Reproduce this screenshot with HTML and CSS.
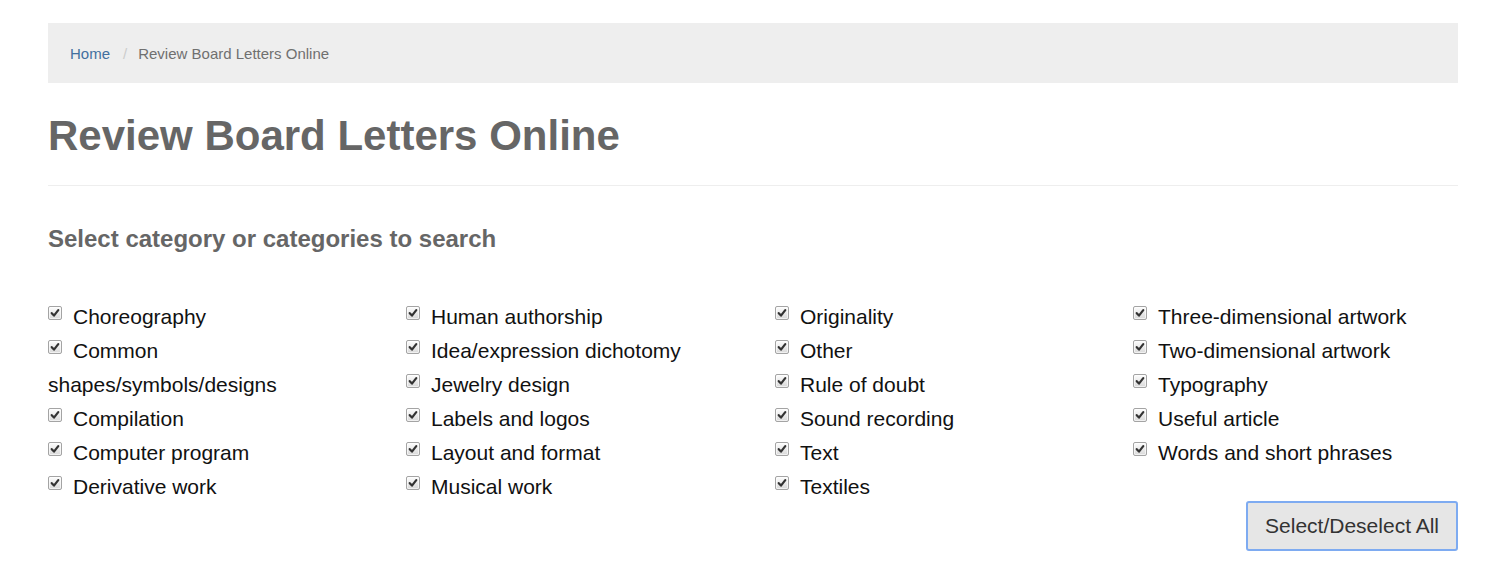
FILE: index.html
```html
<!DOCTYPE html>
<html lang="en">
<head>
<meta charset="utf-8">
<title>Review Board Letters Online</title>
<link rel="stylesheet" href="styles.css">
</head>
<body>
<div class="page">
  <ol class="breadcrumb">
    <li><a href="#" class="crumb-link">Home</a></li>
    <li class="sep">/</li>
    <li class="active">Review Board Letters Online</li>
  </ol>
  <h1 class="title">Review Board Letters Online</h1>
  <hr class="rule">
  <h3 class="subtitle">Select category or categories to search</h3>
  <div class="grid">
    <div class="col">
      <label class="item"><span class="cb"><svg viewBox="0 0 14 14"><path d="M3.2 7.2 L5.8 10 L10.8 3.6" /></svg></span>Choreography</label>
      <label class="item"><span class="cb"><svg viewBox="0 0 14 14"><path d="M3.2 7.2 L5.8 10 L10.8 3.6" /></svg></span>Common shapes/symbols/designs</label>
      <label class="item"><span class="cb"><svg viewBox="0 0 14 14"><path d="M3.2 7.2 L5.8 10 L10.8 3.6" /></svg></span>Compilation</label>
      <label class="item"><span class="cb"><svg viewBox="0 0 14 14"><path d="M3.2 7.2 L5.8 10 L10.8 3.6" /></svg></span>Computer program</label>
      <label class="item"><span class="cb"><svg viewBox="0 0 14 14"><path d="M3.2 7.2 L5.8 10 L10.8 3.6" /></svg></span>Derivative work</label>
    </div>
    <div class="col">
      <label class="item"><span class="cb"><svg viewBox="0 0 14 14"><path d="M3.2 7.2 L5.8 10 L10.8 3.6" /></svg></span>Human authorship</label>
      <label class="item"><span class="cb"><svg viewBox="0 0 14 14"><path d="M3.2 7.2 L5.8 10 L10.8 3.6" /></svg></span>Idea/expression dichotomy</label>
      <label class="item"><span class="cb"><svg viewBox="0 0 14 14"><path d="M3.2 7.2 L5.8 10 L10.8 3.6" /></svg></span>Jewelry design</label>
      <label class="item"><span class="cb"><svg viewBox="0 0 14 14"><path d="M3.2 7.2 L5.8 10 L10.8 3.6" /></svg></span>Labels and logos</label>
      <label class="item"><span class="cb"><svg viewBox="0 0 14 14"><path d="M3.2 7.2 L5.8 10 L10.8 3.6" /></svg></span>Layout and format</label>
      <label class="item"><span class="cb"><svg viewBox="0 0 14 14"><path d="M3.2 7.2 L5.8 10 L10.8 3.6" /></svg></span>Musical work</label>
    </div>
    <div class="col">
      <label class="item"><span class="cb"><svg viewBox="0 0 14 14"><path d="M3.2 7.2 L5.8 10 L10.8 3.6" /></svg></span>Originality</label>
      <label class="item"><span class="cb"><svg viewBox="0 0 14 14"><path d="M3.2 7.2 L5.8 10 L10.8 3.6" /></svg></span>Other</label>
      <label class="item"><span class="cb"><svg viewBox="0 0 14 14"><path d="M3.2 7.2 L5.8 10 L10.8 3.6" /></svg></span>Rule of doubt</label>
      <label class="item"><span class="cb"><svg viewBox="0 0 14 14"><path d="M3.2 7.2 L5.8 10 L10.8 3.6" /></svg></span>Sound recording</label>
      <label class="item"><span class="cb"><svg viewBox="0 0 14 14"><path d="M3.2 7.2 L5.8 10 L10.8 3.6" /></svg></span>Text</label>
      <label class="item"><span class="cb"><svg viewBox="0 0 14 14"><path d="M3.2 7.2 L5.8 10 L10.8 3.6" /></svg></span>Textiles</label>
    </div>
    <div class="col last">
      <label class="item"><span class="cb"><svg viewBox="0 0 14 14"><path d="M3.2 7.2 L5.8 10 L10.8 3.6" /></svg></span>Three-dimensional artwork</label>
      <label class="item"><span class="cb"><svg viewBox="0 0 14 14"><path d="M3.2 7.2 L5.8 10 L10.8 3.6" /></svg></span>Two-dimensional artwork</label>
      <label class="item"><span class="cb"><svg viewBox="0 0 14 14"><path d="M3.2 7.2 L5.8 10 L10.8 3.6" /></svg></span>Typography</label>
      <label class="item"><span class="cb"><svg viewBox="0 0 14 14"><path d="M3.2 7.2 L5.8 10 L10.8 3.6" /></svg></span>Useful article</label>
      <label class="item"><span class="cb"><svg viewBox="0 0 14 14"><path d="M3.2 7.2 L5.8 10 L10.8 3.6" /></svg></span>Words and short phrases</label>
      <div class="actions"><button class="btn" type="button">Select/Deselect All</button></div>
    </div>
  </div>
</div>
</body>
</html>
```

FILE: styles.css
```css
html, body {
  margin: 0;
  padding: 0;
  background: #fff;
}
body {
  font-family: "Liberation Sans", Arial, sans-serif;
  color: #111;
}
.page {
  margin: 23px 34px 0 48px;
}
.breadcrumb {
  list-style: none;
  margin: 0;
  padding: 20px 22px 19px 22px;
  background: #eeeeee;
  display: flex;
  font-size: 15px;
  line-height: 21px;
}
.breadcrumb li {
  margin: 0;
}
.crumb-link {
  color: #42709f;
  text-decoration: none;
}
.sep {
  color: #cccccc;
  padding: 0 11px 0 13px;
}
.active {
  color: #707070;
}
.title {
  margin: 30px 0 0 0;
  font-size: 42px;
  line-height: 46px;
  font-weight: bold;
  color: #666666;
}
.rule {
  margin: 26px 0 0 0;
  border: 0;
  border-top: 1px solid #eeeeee;
  height: 0;
}
.subtitle {
  margin: 40px 0 0 0;
  font-size: 24px;
  line-height: 26px;
  font-weight: bold;
  color: #666666;
}
.grid {
  margin-top: 48px;
  display: grid;
  grid-template-columns: 358px 369px 358px 1fr;
}
.col {
  padding-right: 30px;
}
.col.last {
  padding-right: 0;
}
.item {
  display: block;
  font-size: 21px;
  line-height: 34px;
  color: #111;
}
.cb {
  display: inline-block;
  width: 14px;
  height: 14px;
  margin: 0 11px 4px 0;
  vertical-align: baseline;
  box-sizing: border-box;
  border: 1px solid #a4a4a4;
  border-radius: 2px;
  background: linear-gradient(#fdfdfd, #d9d9d9);
  box-shadow: inset 0 0 0 1px rgba(255,255,255,0.6);
}
.cb svg {
  display: block;
  width: 12px;
  height: 12px;
  fill: none;
  stroke: #333333;
  stroke-width: 2.6;
  stroke-linecap: round;
  stroke-linejoin: round;
}
.actions {
  display: flex;
  justify-content: flex-end;
  margin-top: 31px;
}
.btn {
  font-family: "Liberation Sans", Arial, sans-serif;
  font-size: 21px;
  line-height: 25px;
  color: #333333;
  background: #e6e6e6;
  border: 2px solid #7eabf1;
  border-radius: 3px;
  padding: 10px 17px 11px 17px;
  margin: 0;
}
```
